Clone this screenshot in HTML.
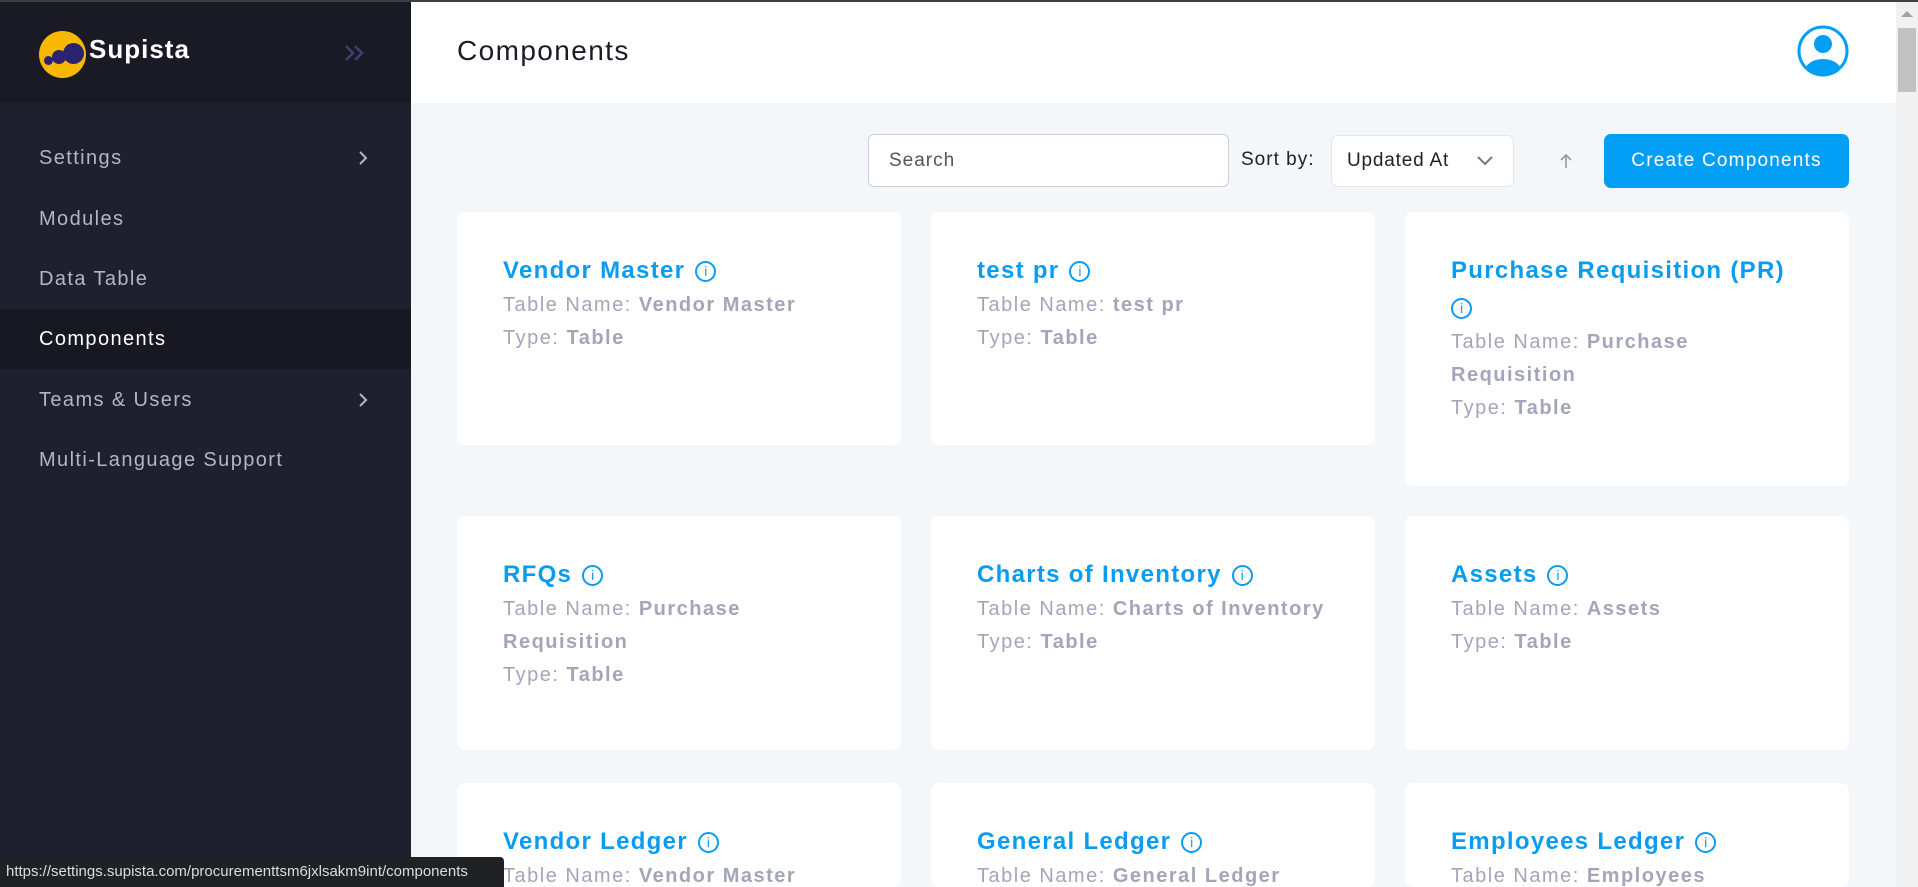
<!DOCTYPE html>
<html><head><meta charset="utf-8"><style>
*{box-sizing:border-box;margin:0;padding:0}
html{width:1918px;height:887px;overflow:hidden}
body{width:1918px;height:887px;overflow:hidden;font-family:"Liberation Sans",sans-serif;background:#f4f7fa;position:relative}
.topline{position:absolute;left:0;top:0;width:1918px;height:2px;background:#3c4043;z-index:5}
.side{position:absolute;left:0;top:0;width:411px;height:887px;background:#1f1f2d}
.sidehead{position:absolute;left:0;top:0;width:411px;height:103px;background:#1a1a24}
.logo{position:absolute;left:39px;top:31px;width:47px;height:47px;border-radius:50%;background:#f9b800}
.dot{position:absolute;border-radius:50%;background:#2a2470}
.brand{position:absolute;left:89px;top:34px;color:#fff;font-size:26px;font-weight:bold;letter-spacing:1px}
.menu{position:absolute;left:0;width:411px;height:60px;line-height:60px;padding-left:39px;color:#b4b4c4;font-size:20px;letter-spacing:1.4px}
.menu.act{background:#181822;color:#fff}
.chev{position:absolute;right:43px;top:0}
.header{position:absolute;left:411px;top:0;width:1485px;height:103px;background:#fff}
.title{position:absolute;left:46px;top:35px;font-size:28px;color:#1b1b26;letter-spacing:1.4px}
.scroll{position:absolute;left:1896px;top:0;width:22px;height:887px;background:#f1f1f1}
.thumb{position:absolute;left:2px;top:28px;width:18px;height:64px;background:#c1c1c1}
.search{position:absolute;left:868px;top:134px;width:361px;height:53px;background:#fff;border:1px solid #ccd;border-radius:6px;font-size:19px;color:#555;padding:15px 20px;letter-spacing:1px}
.sortl{position:absolute;left:1241px;top:149px;font-size:19px;color:#222;letter-spacing:1px}
.sel{position:absolute;left:1331px;top:135px;width:183px;height:52px;background:#fff;border:1px solid #e4e6ec;border-radius:6px;font-size:19px;color:#222;padding:14px 15px;letter-spacing:.8px}
.btn{position:absolute;left:1604px;top:134px;width:245px;height:54px;background:#039ff4;border-radius:7px;color:#fff;font-size:19px;text-align:center;line-height:54px;letter-spacing:1.2px}
.card{position:absolute;background:#fff;border-radius:8px;width:444px;padding:40px 46px 0 46px}
.ct{color:#0a9cf0;font-size:24px;font-weight:bold;line-height:37px;letter-spacing:1.3px}
.cd{color:#a2a6b8;font-size:20px;line-height:33px;letter-spacing:1.5px}
.cd b{font-weight:bold}
.info{display:inline-block;width:21px;height:21px;border:2px solid #0a9cf0;border-radius:50%;font-size:14px;line-height:17px;text-align:center;vertical-align:2px;font-weight:normal;margin-left:2px;letter-spacing:0}
.status{position:absolute;left:0;top:857px;width:504px;height:30px;background:#202124;color:#dadce0;font-size:15px;line-height:30px;padding-left:6px;border-top-right-radius:4px}
</style></head><body>
<div class="topline"></div>
<div class="side">
 <div class="sidehead">
  <div class="logo"><div class="dot" style="left:5px;top:25px;width:9px;height:9px"></div><div class="dot" style="left:13px;top:19px;width:14px;height:14px"></div><div class="dot" style="left:24px;top:12px;width:21px;height:21px"></div></div>
  <div class="brand">Supista</div>
  <svg style="position:absolute;left:343px;top:43px" width="24" height="20" viewBox="0 0 24 20"><path d="M3 3l7 7-7 7M12 3l7 7-7 7" fill="none" stroke="#3f3f72" stroke-width="2.5"/></svg>
 </div>
 <div class="menu" style="top:128px">Settings<svg class="chev" style="top:22px" width="10" height="16" viewBox="0 0 10 16"><path d="M2 2l6 6-6 6" fill="none" stroke="#b4b4c4" stroke-width="2"/></svg></div>
 <div class="menu" style="top:189px">Modules</div>
 <div class="menu" style="top:249px">Data Table</div>
 <div class="menu act" style="top:309px">Components</div>
 <div class="menu" style="top:370px">Teams &amp; Users<svg class="chev" style="top:22px" width="10" height="16" viewBox="0 0 10 16"><path d="M2 2l6 6-6 6" fill="none" stroke="#b4b4c4" stroke-width="2"/></svg></div>
 <div class="menu" style="top:430px">Multi-Language Support</div>
</div>
<div class="header"><div class="title">Components</div>
 <svg style="position:absolute;left:1386px;top:25px" width="52" height="52" viewBox="0 0 52 52"><defs><clipPath id="c"><circle cx="26" cy="26" r="23"/></clipPath></defs><circle cx="26" cy="26" r="24" fill="none" stroke="#039ff4" stroke-width="3"/><circle cx="26" cy="19" r="9" fill="#039ff4"/><ellipse cx="26" cy="46" rx="18" ry="12" fill="#039ff4" clip-path="url(#c)"/></svg>
</div>
<div class="scroll"><svg style="position:absolute;left:5px;top:10px" width="12" height="8"><path d="M0 7L6 1 12 7z" fill="#a3a3a3"/></svg><div class="thumb"></div></div>
<div class="search">Search</div>
<div class="sortl">Sort by:</div>
<div class="sel">Updated At<svg style="position:absolute;right:20px;top:20px" width="16" height="10" viewBox="0 0 16 10"><path d="M1 1l7 7 7-7" fill="none" stroke="#777" stroke-width="2"/></svg></div>
<svg style="position:absolute;left:1559px;top:153px" width="14" height="16" viewBox="0 0 14 16"><path d="M7 15V2M2 7l5-5 5 5" fill="none" stroke="#999" stroke-width="1.6"/></svg>
<div class="btn">Create Components</div>

<div class="card" style="left:457px;top:212px;height:233px"><div class="ct">Vendor Master <span class="info">i</span></div><div class="cd">Table Name: <b>Vendor Master</b></div><div class="cd">Type: <b>Table</b></div></div>
<div class="card" style="left:931px;top:212px;height:233px"><div class="ct">test pr <span class="info">i</span></div><div class="cd">Table Name: <b>test pr</b></div><div class="cd">Type: <b>Table</b></div></div>
<div class="card" style="left:1405px;top:212px;height:274px"><div class="ct">Purchase Requisition (PR)<br><span class="info" style="margin-left:0">i</span></div><div class="cd">Table Name: <b>Purchase<br>Requisition</b></div><div class="cd">Type: <b>Table</b></div></div>

<div class="card" style="left:457px;top:516px;height:234px"><div class="ct">RFQs <span class="info">i</span></div><div class="cd">Table Name: <b>Purchase<br>Requisition</b></div><div class="cd">Type: <b>Table</b></div></div>
<div class="card" style="left:931px;top:516px;height:234px"><div class="ct">Charts of Inventory <span class="info">i</span></div><div class="cd">Table Name: <b>Charts of Inventory</b></div><div class="cd">Type: <b>Table</b></div></div>
<div class="card" style="left:1405px;top:516px;height:234px"><div class="ct">Assets <span class="info">i</span></div><div class="cd">Table Name: <b>Assets</b></div><div class="cd">Type: <b>Table</b></div></div>

<div class="card" style="left:457px;top:783px;height:104px"><div class="ct">Vendor Ledger <span class="info">i</span></div><div class="cd">Table Name: <b>Vendor Master</b></div></div>
<div class="card" style="left:931px;top:783px;height:104px"><div class="ct">General Ledger <span class="info">i</span></div><div class="cd">Table Name: <b>General Ledger</b></div></div>
<div class="card" style="left:1405px;top:783px;height:104px;overflow:hidden"><div class="ct">Employees Ledger <span class="info">i</span></div><div class="cd">Table Name: <b>Employees</b></div></div>

<div class="status">https://settings.supista.com/procurementtsm6jxlsakm9int/components</div>
</body></html>
